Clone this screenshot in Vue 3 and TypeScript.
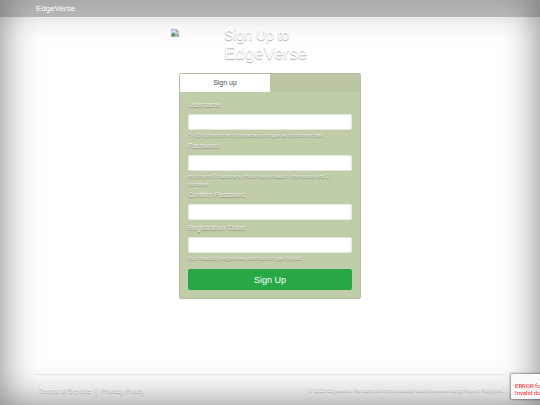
<script setup lang="ts">
import { reactive } from 'vue'

interface Field {
  id: string
  label: string
  type: string
  help?: string
}

const siteName = 'EdgeVerse'

const fields: Field[] = [
  { id: 'username', label: 'Username', type: 'text', help: '3 - 20 alphanumeric characters, no spaces or underscores' },
  { id: 'password', label: 'Password', type: 'password', help: 'minimum 8 characters, must have atleast 6 characters and 2 numbers' },
  { id: 'confirm', label: 'Confirm Password', type: 'password' },
  { id: 'ticket', label: 'Registration Ticket', type: 'text', help: 'You must buy edgeverse premium or get invited.' },
]

const form = reactive<Record<string, string>>({ username: '', password: '', confirm: '', ticket: '' })
</script>

<template>
  <div class="page">
    <nav class="navbar">
      <a class="brand" href="#">{{ siteName }}</a>
    </nav>

    <main class="main">
      <header class="intro">
        <svg class="logo" viewBox="0 0 8 8" aria-hidden="true">
          <path d="M0 0H5.5L8 2.5V8H0Z" fill="#a4abb0" />
          <path d="M.6 .6H5.2V2.8H7.4V5L5.8 4.2 2.2 7.4H.6Z" fill="#c0d4ea" />
          <path d="M.6 7.4V5.6L2.7 3.7 4.6 5.2 2.3 7.4Z" fill="#4b9a46" />
          <path d="M1.3 2.8Q1.5 1.6 2.6 1.9 3.9 1.8 3.8 2.8Z" fill="#fff" />
          <path d="M4.4 8 8 5V5.8L5.4 8Z" fill="#fff" />
          <path d="M5.4 7.4 7.4 5.8V7.4Z" fill="#4b9a46" />
        </svg>
        <h1 class="title">
          <span class="lead">Sign Up to</span>
          <span class="name">{{ siteName }}</span>
        </h1>
      </header>

      <section class="card">
        <div class="tabs">
          <a class="tab" href="#signup">Sign up</a>
        </div>
        <form id="signup" class="form" @submit.prevent>
          <div v-for="field in fields" :key="field.id" class="field">
            <label :for="field.id">{{ field.label }}</label>
            <input :id="field.id" v-model="form[field.id]" :type="field.type" />
            <small v-if="field.help">{{ field.help }}</small>
          </div>
          <button class="submit" type="submit">Sign Up</button>
        </form>
      </section>
    </main>

    <footer class="footer">
      <div class="links">
        <a href="#">Terms of Service</a>
        <span>|</span>
        <a href="#">Privacy Policy</a>
      </div>
      <p class="copyright">© 2023 Edgeverse. We dont own this website source we are using Project Polygons.</p>
    </footer>

    <aside class="captcha">
      <p>ERROR for site owner:<br />Invalid domain for site key</p>
    </aside>
  </div>
</template>

<style>
body {
  margin: 0;
  background: #fff;
}
</style>

<style scoped>
.page {
  box-sizing: border-box;
  min-height: 100vh;
  display: flex;
  flex-direction: column;
  overflow: hidden;
  font-family: "Liberation Sans", Arial, sans-serif;
  font-size: 7px;
  color: #fff;
  text-shadow: 0 1px 1px rgba(0, 0, 0, 0.35);
  box-shadow: inset 0 0 38px rgba(0, 0, 0, 0.52);
}

a {
  color: inherit;
  text-decoration: none;
}

.navbar {
  display: flex;
  align-items: center;
  height: 17px;
  padding: 0 36px;
  background: linear-gradient(rgba(0, 0, 0, 0.11), rgba(0, 0, 0, 0.21));
}

.brand {
  font-size: 8px;
  text-shadow: none;
}

.main {
  flex: 1;
  display: flex;
  flex-direction: column;
  align-items: center;
}

.intro {
  display: flex;
  width: 198px;
  padding-top: 10px;
}

.logo {
  width: 8px;
  height: 8px;
  margin: 2px 45px 0 0;
}

.title {
  display: flex;
  flex-direction: column;
  margin: 0;
  font-weight: 400;
}

.lead {
  font-size: 14px;
  line-height: 17px;
}

.name {
  font-size: 17px;
  line-height: 20px;
}

.card {
  box-sizing: border-box;
  width: 182px;
  margin-top: 9px;
  border: 1px solid #b4bda0;
  border-radius: 2px;
  background: #c0cda9;
}

.tabs {
  display: flex;
  background: #b9c5a3;
}

.tab {
  width: 50%;
  line-height: 18px;
  text-align: center;
  color: #495057;
  background: #fff;
  text-shadow: none;
}

.form {
  display: flex;
  flex-direction: column;
  gap: 3px;
  padding: 8px;
  color: rgba(255, 255, 255, 0.8);
}

.field {
  display: flex;
  flex-direction: column;
}

.field label {
  margin-bottom: 4px;
  line-height: 10px;
}

.field input {
  box-sizing: border-box;
  width: 100%;
  height: 16px;
  padding: 0 5px;
  border: 1px solid #e3e8dc;
  border-radius: 2px;
  background: #fff;
  color: #495057;
  font: inherit;
}

.field small {
  max-width: 92%;
  margin: 1px 0 -1px;
  color: rgba(255, 255, 255, 0.7);
  font-family: "Noto Sans", sans-serif;
  font-size: 5px;
  line-height: 8px;
}

.submit {
  height: 21px;
  margin-top: 5px;
  padding: 0;
  border: 0;
  border-radius: 2px;
  background: #28a745;
  color: #fff;
  font-family: inherit;
  font-size: 9px;
}

.footer {
  display: flex;
  align-items: center;
  justify-content: space-between;
  height: 30px;
  margin: 0 36px;
  border-top: 1px solid rgba(0, 0, 0, 0.08);
  color: rgba(255, 255, 255, 0.8);
}

.links {
  display: flex;
  gap: 4px;
  padding-left: 3px;
}

.copyright {
  margin: 0;
  font-family: "Noto Sans", sans-serif;
  font-size: 5px;
}

.captcha {
  position: fixed;
  right: -83px;
  bottom: 6px;
  box-sizing: border-box;
  width: 112px;
  height: 25px;
  padding: 8px 4px 0;
  border-radius: 1px;
  background: #f9f9f9;
  box-shadow: 0 0 2px 1px rgba(0, 0, 0, 0.35);
  color: #ff2020;
  font-family: Roboto, sans-serif;
  font-size: 6px;
  line-height: 7px;
  text-shadow: none;
}

.captcha p {
  margin: 0;
}
</style>
